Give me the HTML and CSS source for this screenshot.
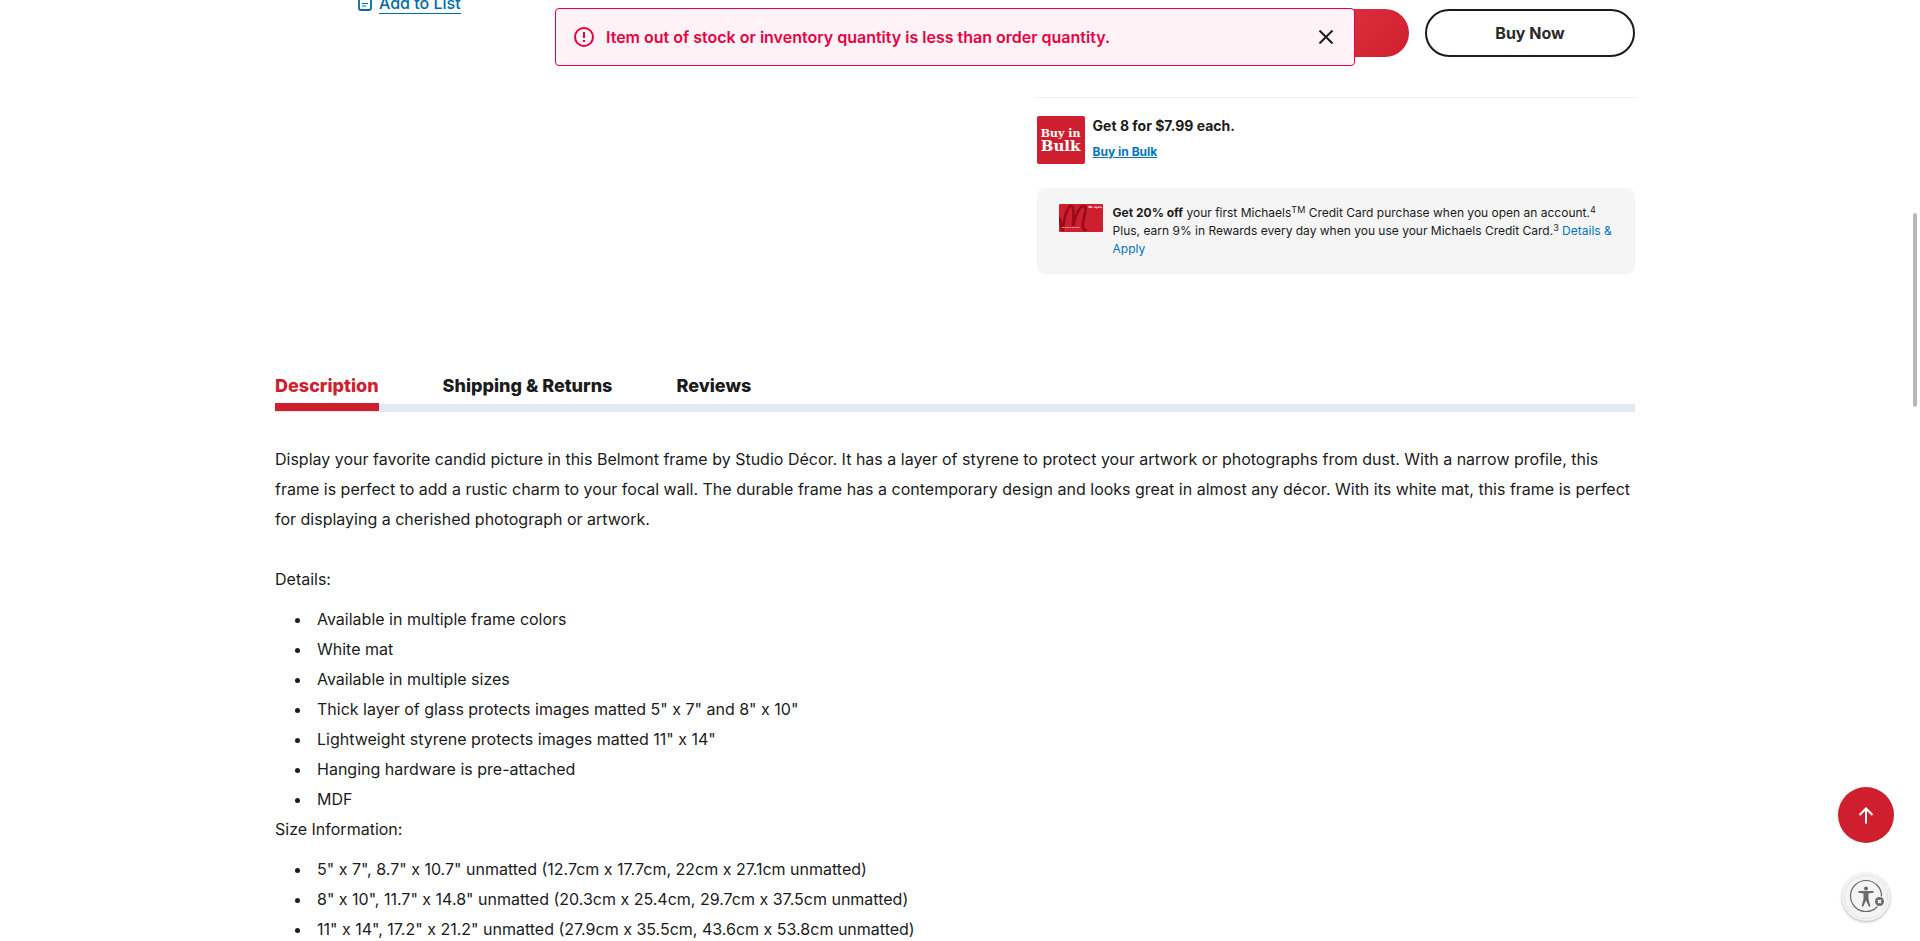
FILE: index.html
```
<!DOCTYPE html>
<html lang="en">
<head>
<meta charset="utf-8">
<title>Belmont Frame by Studio Décor</title>
<link rel="stylesheet" href="styles.css">
</head>
<body>
<div class="page">
  <main class="container">
    <section class="product">
      <div class="gallery">
        <a class="add-list" href="#">
          <svg width="14" height="18" viewBox="0 0 14 18" fill="none" stroke="currentColor" stroke-width="1.800" aria-hidden="true"><path d="M9 1H3a2 2 0 0 0-2 2v12a2 2 0 0 0 2 2h8a2 2 0 0 0 2-2V5z"/><path d="M4 10.500h6M4 13h4" stroke-width="1.200"/></svg>
          <span class="add-list-label">Add to List</span>
        </a>
      </div>
      <div class="purchase">
        <div class="actions">
          <button class="btn btn-cart" type="button" aria-label="Add to Cart"></button>
          <button class="btn btn-buy" type="button">Buy Now</button>
        </div>
        <div class="bulk">
          <div class="bulk-logo"><span>Buy in</span><span class="bulk-logo-big">Bulk</span></div>
          <div class="bulk-text">
            <strong>Get 8 for $7.99 each.</strong>
            <a href="#">Buy in Bulk</a>
          </div>
        </div>
        <div class="offer">
          <svg class="card" width="44" height="28" viewBox="0 0 44 28" aria-hidden="true"><rect width="44" height="28" rx="1" fill="#cf1f2e"/><path d="M0 13c2 4 2 9 3.500 14C5 15 8 2 12 2s2 14 2 20C16 16 19 2 24.500 2s-1.500 13-.5 21c.4 3 2 4 3.500 2" fill="none" stroke="#970c18" stroke-width="2.600"/><path d="M3 23.500h18" stroke="#e9939a" stroke-width="1" stroke-dasharray="2 .5"/><path d="M30 4V2l1 2 1-2v2M33 3v1M35 3h1v1M37 2v2h1V3M39 4V3h1v1M41 2v2M42 3l1 1" fill="none" stroke="#fff" stroke-width=".7"/></svg>
          <p class="offer-text"><strong>Get 20% off</strong> your first Michaels<sup>TM</sup> Credit Card purchase when you open an account.<sup>4</sup> Plus, earn 9% in Rewards every day when you use your Michaels Credit Card.<sup>3</sup> <a href="#">Details &amp; Apply</a></p>
        </div>
      </div>
    </section>

    <div class="tabs" role="tablist">
      <button class="tab tab-active" type="button" role="tab" aria-selected="true">Description</button>
      <button class="tab" type="button" role="tab" aria-selected="false">Shipping &amp; Returns</button>
      <button class="tab" type="button" role="tab" aria-selected="false">Reviews</button>
    </div>

    <section class="description">
      <p class="intro">Display your favorite candid picture in this Belmont frame by Studio Décor. It has a layer of styrene to protect your artwork or photographs from dust. With a narrow profile, this frame is perfect to add a rustic charm to your focal wall. The durable frame has a contemporary design and looks great in almost any décor. With its white mat, this frame is perfect for displaying a cherished photograph or artwork.</p>
      <p>Details:</p>
      <ul>
        <li>Available in multiple frame colors</li>
        <li>White mat</li>
        <li>Available in multiple sizes</li>
        <li>Thick layer of glass protects images matted 5" x 7" and 8" x 10"</li>
        <li>Lightweight styrene protects images matted 11" x 14"</li>
        <li>Hanging hardware is pre-attached</li>
        <li>MDF</li>
      </ul>
      <p>Size Information:</p>
      <ul>
        <li>5" x 7", 8.7" x 10.7" unmatted (12.7cm x 17.7cm, 22cm x 27.1cm unmatted)</li>
        <li>8" x 10", 11.7" x 14.8" unmatted (20.3cm x 25.4cm, 29.7cm x 37.5cm unmatted)</li>
        <li>11" x 14", 17.2" x 21.2" unmatted (27.9cm x 35.5cm, 43.6cm x 53.8cm unmatted)</li>
      </ul>
    </section>
  </main>

  <div class="toast-layer">
    <div class="toast" role="alert">
      <svg width="20" height="20" viewBox="0 0 20 20" fill="none" stroke="currentColor" stroke-width="2" aria-hidden="true"><circle cx="10" cy="10" r="9"/><path d="M10 5v6M10 13v2"/></svg>
      <span class="toast-text">Item out of stock or inventory quantity is less than order quantity.</span>
      <button class="toast-close" type="button" aria-label="Close"><svg width="14" height="14" viewBox="0 0 14 14" fill="none" stroke="currentColor" stroke-width="2" aria-hidden="true"><path d="M.5.5l13 13M13.500.5l-13 13"/></svg></button>
    </div>
  </div>

  <div class="floating">
    <button class="to-top" type="button" aria-label="Back to top"><svg width="16" height="17" viewBox="0 0 16 17" fill="none" stroke="currentColor" stroke-width="2" aria-hidden="true"><path d="M8 16.500V2M1.500 8L8 1.500 14.500 8"/></svg></button>
    <button class="a11y" type="button" aria-label="Accessibility"><svg width="48" height="48" viewBox="1 1 48 48" aria-hidden="true"><circle cx="25" cy="25" r="21.500" fill="none" stroke="#e2e2e2" stroke-dasharray="4 1"/><circle cx="25" cy="24" r="15.500" fill="none" stroke="#6b6b6d" stroke-width="1.200"/><circle cx="25" cy="16.500" r="2" fill="#6b6b6d"/><path d="M17.500 19h15v1.800l-5 .7v5.500l2 7.500h-1.700L25 28.500l-2.800 6h-1.700l2-7.500v-5.500l-5-.7z" fill="#6b6b6d"/><circle cx="38.500" cy="29.500" r="5.500" fill="#f4f4f4"/><circle cx="38.500" cy="29.500" r="4.500" fill="#6b6b6d"/><path d="M37 28l3 3M40 28l-3 3" stroke="#fff" stroke-width="1.500"/></svg></button>
  </div>
  <div class="scroll-thumb"></div>
</div>
</body>
</html>
```
FILE: styles.css
```
* { box-sizing: border-box; }

body {
  margin: 0;
  font-family: Inter, "Liberation Sans", sans-serif;
  font-size: 16px;
  line-height: 30px;
  color: #1b1b1b;
  background: #fff;
}

button { font: inherit; cursor: pointer; }
a { color: #0075c1; text-decoration: none; }
p, ul { margin: 0; }

.page {
  position: relative;
  height: 100vh;
  overflow: hidden;
  padding-right: 10px;
}

.container { max-width: 1360px; margin: 0 auto; }

.product {
  display: grid;
  grid-template-columns: 56fr 44fr;
}

.gallery { padding-left: 83px; }

.add-list {
  display: flex;
  gap: 7px;
  width: fit-content;
  margin-top: -7px;
  color: #006ba6;
  font-weight: 500;
  line-height: 20px;
}
.add-list-label { border-bottom: 1px solid currentColor; }

.purchase { padding-top: 9px; }

.actions {
  display: flex;
  justify-content: flex-end;
  gap: 16px;
  padding-bottom: 40px;
  border-bottom: 1px solid #ebebeb;
}

.btn {
  width: 210px;
  height: 48px;
  padding: 0;
  border: 0;
  border-radius: 24px;
  font-weight: 700;
}
.btn-cart { color: #fff; background: linear-gradient(135deg, #eb4452, #cf1f2e); }
.btn-buy { color: #2a2a2a; background: #fff; border: 2px solid #1b1b1b; }

.bulk { display: flex; gap: 8px; margin-top: 18px; }

.bulk-logo {
  display: flex;
  flex-direction: column;
  align-items: center;
  justify-content: center;
  width: 48px;
  height: 48px;
  border-radius: 2px;
  background: #cf1f2e;
  color: #fff;
  font-family: "DejaVu Serif", serif;
  font-size: 11px;
  font-weight: 700;
  line-height: 13px;
}
.bulk-logo-big { font-size: 15px; }

.bulk-text {
  display: flex;
  flex-direction: column;
  gap: 6px;
  font-size: 14px;
  line-height: 20px;
}
.bulk-text a { font-size: 12px; font-weight: 700; text-decoration: underline; }

.offer {
  display: flex;
  gap: 10px;
  margin-top: 24px;
  padding: 16px 22px;
  border-radius: 8px;
  background: #f5f5f5;
}
.card { flex: none; }
.offer-text { font-size: 12px; line-height: 18px; }
.offer-text sup { font-size: 9px; line-height: 0; vertical-align: 4px; }

.tabs {
  display: flex;
  gap: 64px;
  margin-top: 95px;
  border-bottom: 8px solid #e1e8f0;
}
.tab {
  margin-bottom: -7px;
  padding: 2px 0;
  border: 0;
  border-bottom: 8px solid transparent;
  background: none;
  color: #1b1b1b;
  font-size: 18px;
  font-weight: 800;
  line-height: 30px;
}
.tab-active { color: #cf1f2e; border-bottom-color: #cf1f2e; }

.description { margin-top: 32px; }
.intro { margin-bottom: 30px; }
.description ul { margin-top: 10px; padding-left: 37px; }
.description li { padding-left: 5px; }

.toast-layer {
  position: absolute;
  top: 8px;
  left: 0;
  right: 10px;
  display: flex;
  justify-content: center;
}
.toast {
  display: flex;
  align-items: center;
  gap: 12px;
  width: 100%;
  max-width: 800px;
  padding: 13px 19px 13px 18px;
  border: 1px solid #e8003f;
  border-radius: 4px;
  background: #fff3f7;
  color: #e8003f;
}
.toast-text { flex: 1; font-weight: 600; }
.toast-close {
  display: flex;
  padding: 2px;
  border: 0;
  background: none;
  color: #1b1b1b;
}

.floating {
  position: absolute;
  right: 26px;
  bottom: 20px;
  display: flex;
  flex-direction: column;
  align-items: center;
  gap: 30px;
}
.to-top {
  display: flex;
  align-items: center;
  justify-content: center;
  width: 56px;
  height: 56px;
  padding: 0;
  border: 0;
  border-radius: 50%;
  background: #cf1f2e;
  color: #fff;
}
.a11y {
  display: flex;
  padding: 0;
  border: 0;
  border-radius: 50%;
  background: #f4f4f4;
  box-shadow: 0 1px 3px rgba(0, 0, 0, .3);
}

.scroll-thumb {
  position: absolute;
  top: 213px;
  right: 3px;
  width: 4px;
  height: 194px;
  border-radius: 2px;
  background: #b8b8b8;
}
```
